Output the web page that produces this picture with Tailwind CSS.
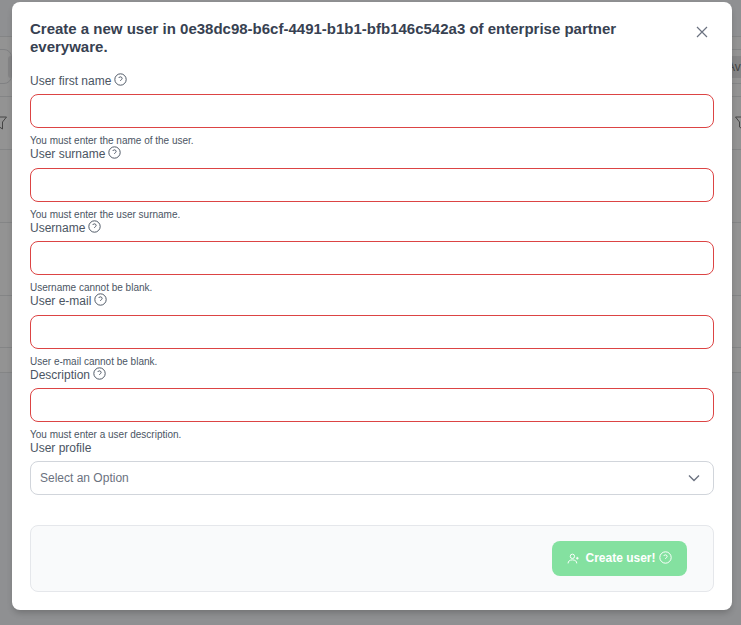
<!DOCTYPE html>
<html lang="en">
<head>
<meta charset="UTF-8">
<title>Create user</title>
<script src="https://cdn.jsdelivr.net/npm/@tailwindcss/browser@4"></script>
</head>
<body class="bg-white font-['Liberation_Sans',sans-serif] text-[#4b5563]">
  <!-- page behind the dialog -->
  <div class="h-[625px] w-[741px] overflow-hidden bg-[#8f9092] relative">
    <div class="h-[37px] border-b border-[#848586]"></div>
    <div class="flex h-[60px] items-center justify-between border-b border-[#848586] bg-[#939393]">
      <div class="-ml-[20px] flex h-[35px] w-[32px] items-center justify-end rounded-lg border border-[#808183]">
        <div class="h-[22px] w-[3px] rounded-l-lg bg-[#858586]"></div>
      </div>
      <div class="flex h-[35px] w-[14px] items-center border-y border-[#848586]">
        <div class="flex h-[22px] w-[14px] items-center overflow-hidden bg-[#858586] text-[12px] text-[#444]">Av</div>
      </div>
    </div>
    <div class="flex h-[53px] items-center justify-between border-b border-[#848586] bg-[#939393]">
      <svg class="-ml-[5px] w-[12px] h-[14px] text-[#444]" viewBox="0 0 12 14" fill="none" stroke="currentColor"><path d="M0.5 1h11l-4 5v7l-3-2V6z"/></svg>
      <svg class="-mr-[6px] w-[12px] h-[14px] text-[#444]" viewBox="0 0 12 14" fill="none" stroke="currentColor"><path d="M0.5 1h11l-4 5v7l-3-2V6z"/></svg>
    </div>
    <div class="h-[73px] border-b border-[#848586] bg-[#929292]"></div>
    <div class="h-[73px] border-b border-[#848586] bg-[#939393]"></div>
    <div class="h-[52px] border-b border-[#848586] bg-[#939393]"></div>
    <div class="h-[25px] border-b border-[#848586] bg-[#939393]"></div>

    <!-- dialog -->
    <div class="absolute left-[12px] top-[2px] w-[720px] h-[608px] bg-white rounded-lg shadow-[0_4px_6px_-1px_rgba(0,0,0,0.2)] px-[18px] pt-[18px]">
      <div class="flex items-start justify-between">
        <h3 class="w-[640px] text-[15px] leading-[18px] font-bold text-[#374151]">Create a new user in 0e38dc98-b6cf-4491-b1b1-bfb146c542a3 of enterprise partner everyware.</h3>
        <button class="mr-[2px] mt-[2px] text-[#6b7280]">
          <svg class="w-5 h-5" viewBox="0 0 20 20" fill="none" stroke="currentColor" stroke-width="1.2"><path d="M5 5l10 10M15 5L5 15"/></svg>
        </button>
      </div>

      <div class="mt-[16px] flex flex-col">
        <div class="h-[73.5px]">
          <label class="flex h-[17px] items-center gap-[3px] text-[12px]">User first name
            <svg class="-mt-[3px] w-[13px] h-[13px]" viewBox="0 0 24 24" fill="none" stroke="currentColor" stroke-width="1.8"><circle cx="12" cy="12" r="10.5"/><path d="M8.8 9.2a3.2 3.2 0 0 1 6.2 1c0 2.1-3.2 2.6-3.2 4.4"/><path d="M11.8 18h.01" stroke-width="2.2"/></svg>
          </label>
          <input class="mt-[5px] block w-full h-[34px] rounded-lg border border-[#dc4444] bg-white">
          <p class="mt-[6px] text-[10px] leading-[13px] text-[#4b5563]">You must enter the name of the user.</p>
        </div>
        <div class="h-[73.5px]">
          <label class="flex h-[17px] items-center gap-[3px] text-[12px]">User surname
            <svg class="-mt-[3px] w-[13px] h-[13px]" viewBox="0 0 24 24" fill="none" stroke="currentColor" stroke-width="1.8"><circle cx="12" cy="12" r="10.5"/><path d="M8.8 9.2a3.2 3.2 0 0 1 6.2 1c0 2.1-3.2 2.6-3.2 4.4"/><path d="M11.8 18h.01" stroke-width="2.2"/></svg>
          </label>
          <input class="mt-[5px] block w-full h-[34px] rounded-lg border border-[#dc4444] bg-white">
          <p class="mt-[6px] text-[10px] leading-[13px] text-[#4b5563]">You must enter the user surname.</p>
        </div>
        <div class="h-[73.5px]">
          <label class="flex h-[17px] items-center gap-[3px] text-[12px]">Username
            <svg class="-mt-[3px] w-[13px] h-[13px]" viewBox="0 0 24 24" fill="none" stroke="currentColor" stroke-width="1.8"><circle cx="12" cy="12" r="10.5"/><path d="M8.8 9.2a3.2 3.2 0 0 1 6.2 1c0 2.1-3.2 2.6-3.2 4.4"/><path d="M11.8 18h.01" stroke-width="2.2"/></svg>
          </label>
          <input class="mt-[5px] block w-full h-[34px] rounded-lg border border-[#dc4444] bg-white">
          <p class="mt-[6px] text-[10px] leading-[13px] text-[#4b5563]">Username cannot be blank.</p>
        </div>
        <div class="h-[73.5px]">
          <label class="flex h-[17px] items-center gap-[3px] text-[12px]">User e-mail
            <svg class="-mt-[3px] w-[13px] h-[13px]" viewBox="0 0 24 24" fill="none" stroke="currentColor" stroke-width="1.8"><circle cx="12" cy="12" r="10.5"/><path d="M8.8 9.2a3.2 3.2 0 0 1 6.2 1c0 2.1-3.2 2.6-3.2 4.4"/><path d="M11.8 18h.01" stroke-width="2.2"/></svg>
          </label>
          <input class="mt-[5px] block w-full h-[34px] rounded-lg border border-[#dc4444] bg-white">
          <p class="mt-[6px] text-[10px] leading-[13px] text-[#4b5563]">User e-mail cannot be blank.</p>
        </div>
        <div class="h-[73.5px]">
          <label class="flex h-[17px] items-center gap-[3px] text-[12px]">Description
            <svg class="-mt-[3px] w-[13px] h-[13px]" viewBox="0 0 24 24" fill="none" stroke="currentColor" stroke-width="1.8"><circle cx="12" cy="12" r="10.5"/><path d="M8.8 9.2a3.2 3.2 0 0 1 6.2 1c0 2.1-3.2 2.6-3.2 4.4"/><path d="M11.8 18h.01" stroke-width="2.2"/></svg>
          </label>
          <input class="mt-[5px] block w-full h-[34px] rounded-lg border border-[#dc4444] bg-white">
          <p class="mt-[6px] text-[10px] leading-[13px] text-[#4b5563]">You must enter a user description.</p>
        </div>
        <div>
          <label class="block h-[17px] text-[12px] leading-[17px]">User profile</label>
          <div class="mt-[4px] flex h-[34px] items-center justify-between rounded-lg border border-[#d1d5db] bg-white pl-[9px] pr-[12px]">
            <span class="text-[12px] text-[#6b7280]">Select an Option</span>
            <svg class="w-[14px] h-[14px] text-[#6b7280]" viewBox="0 0 14 14" fill="none" stroke="currentColor" stroke-width="1.4"><path d="M2 4.5l5 5 5-5"/></svg>
          </div>
        </div>
      </div>

      <div class="mt-[30px] flex h-[67px] items-center justify-end rounded-lg border border-[#e5e7eb] bg-[#f9fafb] pr-[26px]">
        <button class="flex h-[35px] w-[135px] items-center justify-center gap-[5px] rounded-lg bg-[#84e1a0] text-[12px] font-bold text-white">
          <svg class="w-[13px] h-[13px]" viewBox="0 0 24 24" fill="none" stroke="currentColor" stroke-width="1.8"><circle cx="10" cy="8" r="4"/><path d="M2 21c0-4 3-6.5 8-6.5s8 2.5 8 6.5"/><path d="M19 9v5M16.5 11.5h5"/></svg>
          <span class="flex items-center gap-[3px]">Create user!
            <svg class="-mt-[1px] w-[13px] h-[13px]" viewBox="0 0 24 24" fill="none" stroke="currentColor" stroke-width="1.8"><circle cx="12" cy="12" r="10.5"/><path d="M8.8 9.2a3.2 3.2 0 0 1 6.2 1c0 2.1-3.2 2.6-3.2 4.4"/><path d="M11.8 18h.01" stroke-width="2.2"/></svg>
          </span>
        </button>
      </div>
    </div>
  </div>
</body>
</html>
